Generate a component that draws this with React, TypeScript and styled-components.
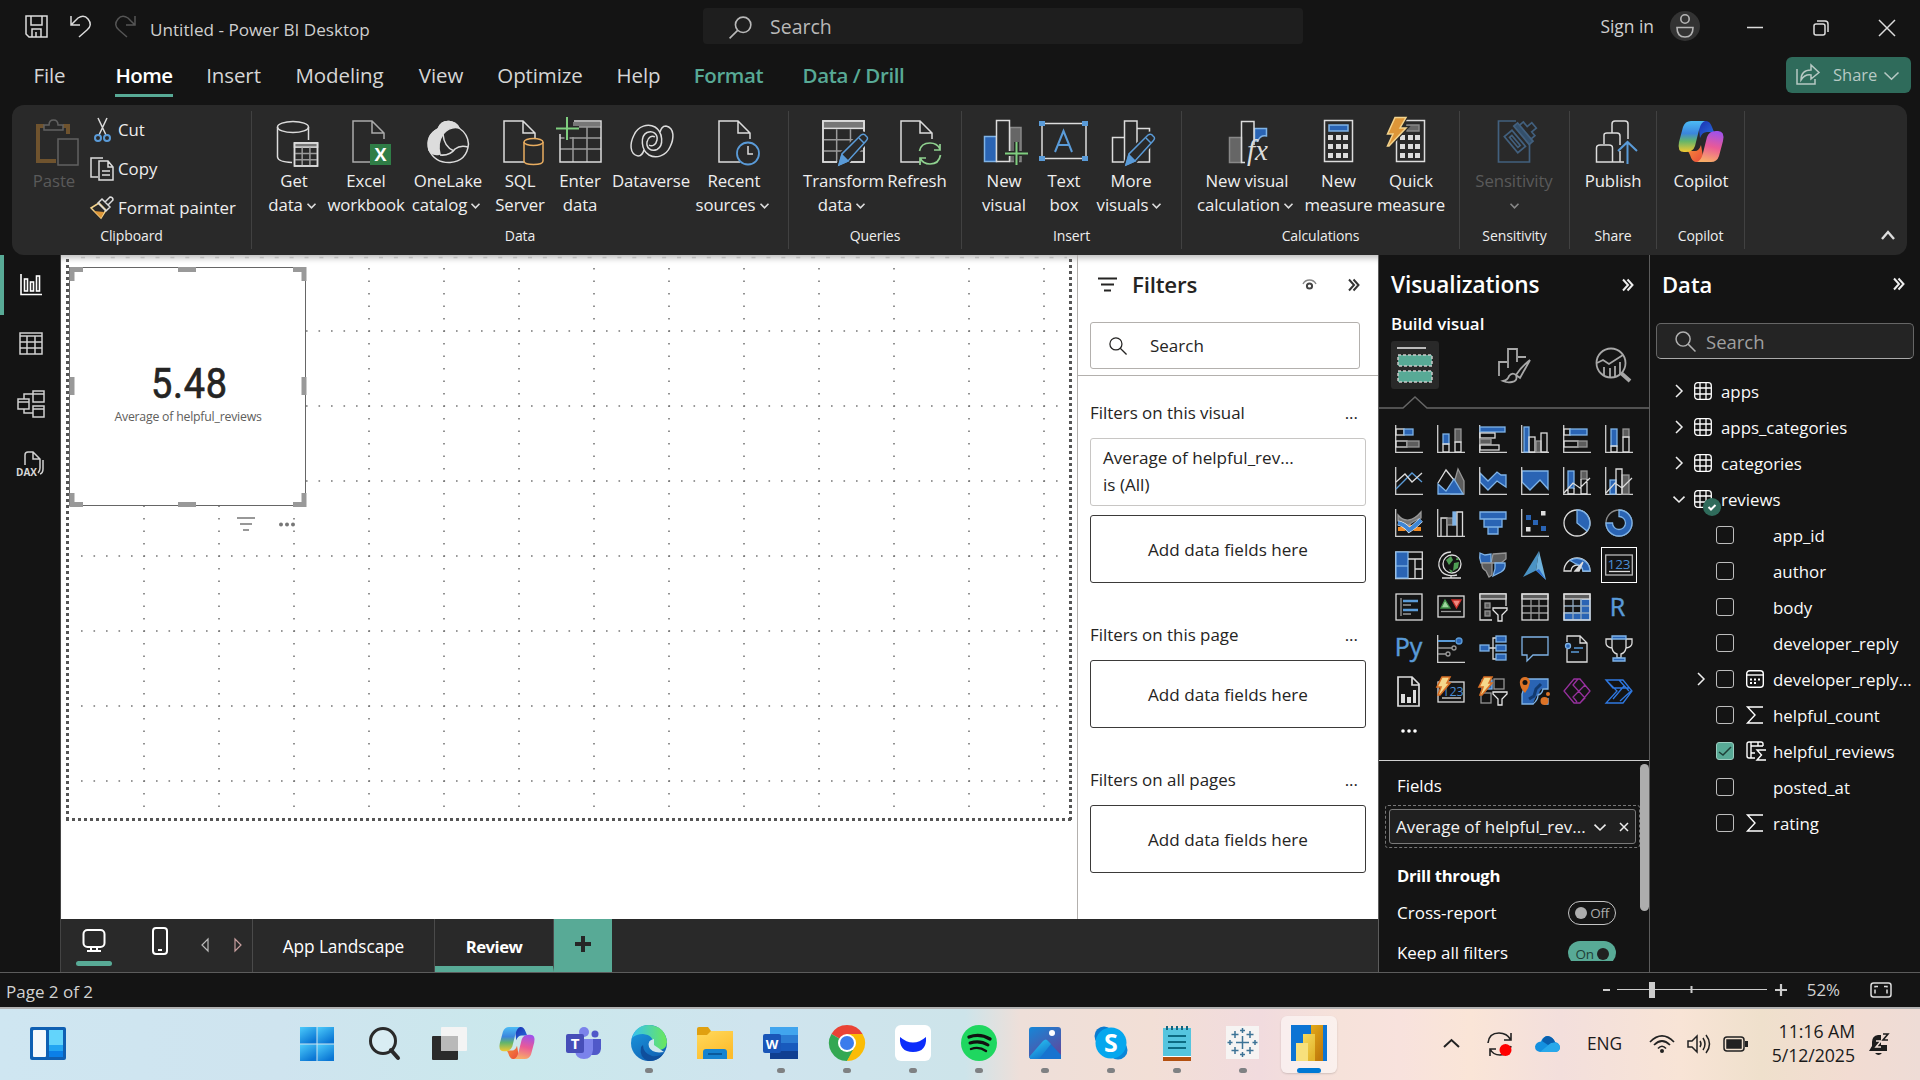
import React from 'react';
import styled, { createGlobalStyle, css } from 'styled-components';

const C = {
  bg: '#141414', panel: '#292929', line: '#5c5c5c', text: '#e8e8e8', dim: '#5f5f5f',
  green: '#58aa96', blue: '#2a64b4', lblue: '#7fb3e6', sky: '#5a9bd8', grey: '#666', lgrey: '#9a9a9a', w: '#dcdcdc',
};

const Global = createGlobalStyle`
  * { box-sizing: border-box; }
  body { margin: 0; background: ${C.bg}; overflow: hidden; font-family: "Open Sans", "Noto Sans", sans-serif; }
  svg { display: block; flex: none; overflow: visible; }
`;

const Root = styled.div`width: 1920px; height: 1080px; display: flex; flex-direction: column; color: ${C.text}; background: ${C.bg};`;
const Label = styled.span<{ $s?: number; $w?: number; $ls?: number; $c?: string; $ml?: number; $lh?: number }>`
  white-space: nowrap; font-size: ${p => p.$s ?? 17}px; font-weight: ${p => p.$w ?? 400};
  letter-spacing: ${p => p.$ls ?? 0}px; color: ${p => p.$c ?? 'inherit'};
  margin-left: ${p => p.$ml ?? 0}px; line-height: ${p => p.$lh ?? 24}px;
`;
const Shift = styled.span<{ $ml?: number; $mt?: number }>`display: block; flex: none; margin-left: ${p => p.$ml ?? 0}px; margin-top: ${p => p.$mt ?? 0}px;`;

/* ---------- top bars ---------- */
const TitleBar = styled.header`height: 52px; flex: none; display: flex; align-items: flex-start; padding-left: 25px;`;
const TitleText = styled.div`width: 234px; margin-left: 14px; font-size: 17.15px; line-height: 59px; white-space: nowrap; color: #cfcfcf;`;
const SearchTop = styled.div`width: 600px; height: 36px; margin: 8px 0 0 310px; background: #1e1e1e; border-radius: 4px; display: flex; align-items: center; padding: 2px 0 0 26px; color: #b9b9b9;`;
const Avatar = styled.div`width: 30px; height: 30px; border-radius: 50%; background: #333; margin: 11px 0 0 16px; display: flex; align-items: center; justify-content: center;`;
const MenuBar = styled.nav`height: 53px; flex: none; display: flex; align-items: flex-start; padding-left: 34px;`;
const MenuTab = styled.div<{ $w: number; $gap: number; $on?: boolean; $c?: string }>`
  width: ${p => p.$w}px; margin-right: ${p => p.$gap}px; height: 45px; display: flex; justify-content: center;
  white-space: nowrap; font-size: 20.5px; line-height: 46px; color: ${p => p.$c ?? (p.$on ? '#fff' : '#d6d6d6')};
  font-weight: ${p => (p.$on || p.$c ? 600 : 400)}; letter-spacing: ${p => (p.$on ? -0.6 : p.$c ? -0.4 : -0.1)}px;
  ${p => p.$on && css`border-bottom: 3px solid ${C.green};`}
`;
const ShareBtn = styled.button`
  width: 125px; height: 36px; margin: 5px 0 0 auto; margin-right: 9px; border: 0; border-radius: 6px; background: #2f6b5b; color: #b7c9c4;
  display: flex; align-items: center; padding: 0 0 0 10px; font-family: inherit;
`;
const Ribbon = styled.section`height: 150px; flex: none; margin: 0 13px 0 12px; background: ${C.panel}; border-radius: 12px; display: flex; position: relative; z-index: 2;`;
const Group = styled.div<{ $w: number }>`
  width: ${p => p.$w}px; height: 138px; margin-top: 6px; border-right: 1px solid #414141; display: flex; flex-direction: column;
`;
const GroupRow = styled.div<{ $pl: number }>`display: flex; height: 113px; flex: none; padding-left: ${p => p.$pl}px; padding-top: 6px;`;
const GroupName = styled.div`text-align: center; font-size: 14px; line-height: 22px; padding-top: 1px; letter-spacing: -0.1px; color: #eee;`;
const Tool = styled.div<{ $w: number; $off?: boolean }>`
  width: ${p => p.$w}px; flex: none; display: flex; flex-direction: column; align-items: center; color: ${p => (p.$off ? '#5a5a5a' : '#efefef')};
`;
const ToolText = styled.div`margin-top: 2px; font-size: 16.8px; line-height: 24px; text-align: center; white-space: nowrap; letter-spacing: -0.1px;`;
const ToolLine = styled.div<{ $drop?: boolean }>`display: flex; align-items: center; justify-content: center; gap: 4px; height: 24px; padding-right: ${p => (p.$drop ? 4 : 0)}px;`;
const ClipList = styled.div`display: flex; flex-direction: column; margin-left: 6px; margin-top: -7px;`;
const ClipItem = styled.div`display: flex; flex: none; align-items: center; height: 39px; gap: 4px; color: #eee;`;
const Collapse = styled.div`margin: 125px 12px 0 auto;`;

/* ---------- body ---------- */
const Body = styled.main`height: 718px; flex: none; display: flex; border-bottom: 1px solid ${C.line};`;
const Work = styled.div`width: 1317px; display: flex; flex-direction: column;`;
const WorkTop = styled.div`height: 664px; flex: none; display: flex; background: #fff; box-shadow: inset 0 8px 6px -5px #bbb;`;
const Rail = styled.aside`width: 61px; border-right: 1px solid #444; display: flex; flex-direction: column;`;
const RailBtn = styled.div<{ $on?: boolean; $up?: number }>`height: 60px; display: flex; align-items: center; justify-content: center; border-left: 4px solid ${p => (p.$on ? C.green : 'transparent')}; padding-right: 2px; padding-bottom: ${p => p.$up ?? 0}px;`;
const Canvas = styled.div`width: 1016px; position: relative; overflow: hidden;`;
const Grid = styled.svg`position: absolute; left: 0; top: 0;`;
const Card = styled.div`position: absolute; left: 8px; top: 12px; width: 237px; height: 239px; border: 1px solid #666; background: #fff; display: flex; flex-direction: column; align-items: center; padding-top: 88px;`;
const Handles = styled.svg`position: absolute; left: -1px; top: -2px;`;
const Big = styled.div`font-family: Roboto, sans-serif; font-weight: 400; -webkit-text-stroke: 0.7px #252423; font-size: 42px; line-height: 56px; height: 49px; color: #252423; transform: scaleX(0.9); letter-spacing: 0.8px; padding-left: 4px;`;
const Small = styled.div`font-size: 12.3px; line-height: 20px; color: #605e5c; letter-spacing: -0.22px; padding: 2px 0 0 1px;`;
const CardTools = styled.div`position: absolute; left: 176px; top: 262px; display: flex; align-items: center; gap: 24px;`;

const Filters = styled.aside`width: 301px; border-left: 1px solid #b3b0ad; color: #252423; display: flex; flex-direction: column;`;
const FilterHead = styled.div`height: 121px; border-bottom: 1px solid #b3b0ad; padding: 15px 0 0 12px;`;
const Row = styled.div<{ $h?: number; $pl?: number; $pr?: number; $mt?: number }>`display: flex; align-items: center; height: ${p => p.$h ?? 30}px; padding-left: ${p => p.$pl ?? 0}px; padding-right: ${p => p.$pr ?? 0}px; margin-top: ${p => p.$mt ?? 0}px;`;
const Push = styled.span`flex: 1;`;
const FSearch = styled.div`margin-top: 22px; width: 270px; height: 47px; border: 1px solid #b3b0ad; border-radius: 3px; display: flex; align-items: center; padding-left: 18px;`;
const FSection = styled.div<{ $mt: number }>`margin: ${p => p.$mt}px 12px 0 12px; display: flex; flex-direction: column;`;
const FTitle = styled.div`height: 50px; display: flex; justify-content: space-between; align-items: center; font-size: 16.9px; padding: 0 8px 2px 0;`;
const FBox = styled.div<{ $soft?: boolean }>`
  height: 68px; border: 1px solid ${p => (p.$soft ? '#c8c6c4' : '#3b3a39')}; border-radius: 3px; margin-bottom: 9px; font-size: 17.1px; line-height: 27px; white-space: nowrap;
  display: flex; ${p => (p.$soft ? css`flex-direction: column; justify-content: center; padding: 0 0 3px 12px;` : css`align-items: center; justify-content: center;`)}
`;

const Tabs = styled.div`height: 53px; background: ${C.panel}; display: flex; border-left: 1px solid #444; margin-left: -1px;`;
const ViewMode = styled.div<{ $on?: boolean; $ml: number }>`
  width: 36px; height: 47px; margin-left: ${p => p.$ml}px; display: flex; justify-content: center; padding-top: 8px;
  ${p => p.$on && css`&::after { content: ''; position: absolute; width: 36px; height: 5px; border-radius: 3px; background: ${C.green}; margin-top: 34px; }`}
`;
const PageTab = styled.div<{ $w: number; $on?: boolean }>`
  width: ${p => p.$w}px; display: flex; justify-content: center; align-items: center; border-right: 1px solid #4a4a4a; color: #fff;
  font-weight: ${p => (p.$on ? 700 : 400)}; font-size: ${p => (p.$on ? 16.7 : 17.3)}px; letter-spacing: ${p => (p.$on ? -0.5 : -0.1)}px; padding-top: ${p => (p.$on ? 7 : 2)}px;
  ${p => p.$on && css`border-bottom: 6px solid ${C.green};`}
`;
const AddTab = styled.div`width: 58px; background: ${C.green}; display: flex; align-items: center; justify-content: center; padding-bottom: 3px;`;

const Viz = styled.aside`width: 272px; border-left: 1px solid ${C.line}; border-right: 1px solid ${C.line}; display: flex; flex-direction: column; color: #fff; overflow: hidden;`;
const VizHead = styled.div`padding: 15px 0 0 12px; height: 150px; flex: none;`;
const VizTab = styled.div<{ $on?: boolean }>`width: 48px; height: 48px; border-radius: 3px; background: ${p => (p.$on ? C.panel : 'transparent')}; display: flex; align-items: center; justify-content: center;`;
const VizTabs = styled.div`display: flex; gap: 51px; margin-top: 5px;`;
const VizGrid = styled.div`display: grid; grid-template-columns: repeat(6, 42px); grid-auto-rows: 42px; padding-left: 9px; margin-top: 9px; height: 342px; flex: none;`;
const VizCell = styled.div<{ $sel?: boolean }>`width: 36px; height: 36px; margin: 3px; display: flex; align-items: center; justify-content: center; ${p => p.$sel && css`border: 1px solid #fff;`}`;
const Fields = styled.div`border-top: 1px solid #d0d0d0; height: 200px; flex: none; display: flex; justify-content: space-between;`;
const FieldCol = styled.div`width: 262px; padding: 13px 0 0 6px;`;
const Bar = styled.div`width: 9px; height: 147px; border-radius: 5px; background: #adadad; margin-top: 3px;`;
const Well = styled.div`width: 255px; height: 43px; border: 1px dashed #777; border-radius: 3px; margin-top: 7px; padding: 3px;`;
const Chip = styled.div`height: 35px; border: 1px solid #7a7a7a; border-radius: 3px; background: #202020; display: flex; align-items: center; padding-left: 6px; color: #f2f2f2;`;
const Toggle = styled.div<{ $on?: boolean }>`
  width: 48px; height: 24px; border-radius: 12px; display: flex; align-items: center; justify-content: center; gap: 3px; font-size: 13.5px; letter-spacing: -0.3px;
  ${p => (p.$on ? css`background: ${C.green}; color: #1f3f37; flex-direction: row-reverse; padding-top: 1px;` : css`border: 1px solid #c4c4c4; color: #adadad;`)}
  &::before { content: ''; width: 12px; height: 12px; border-radius: 50%; background: ${p => (p.$on ? '#202020' : '#adadad')}; }
`;
const Clip = styled.div`height: 22px; overflow: hidden; margin-top: 14px;`;

const Data = styled.aside`width: 270px; color: #fff; padding-top: 14px;`;
const DSearch = styled.div`margin: 24px 0 14px 6px; width: 258px; height: 36px; border: 1px solid #666; border-bottom-color: #aaa; border-radius: 5px; background: #242424; display: flex; align-items: center; padding: 1px 0 0 18px; color: #a0a0a0;`;
const TreeRow = styled.div<{ $child?: boolean }>`height: 36px; display: flex; align-items: center; padding-left: ${p => (p.$child ? 47 : 20)}px; font-size: 16.85px; white-space: nowrap; color: #fafafa;`;
const Slot = styled.span<{ $w: number }>`width: ${p => p.$w}px; flex: none; display: flex; align-items: center;`;
const Check = styled.span<{ $on?: boolean }>`width: 18px; height: 18px; flex: none; border: 1px solid ${p => (p.$on ? '#9ccdc0' : '#bdbdbd')}; border-radius: 3px; background: ${p => (p.$on ? C.green : 'transparent')}; display: flex; align-items: center; justify-content: center; margin-right: 12px;`;

const Status = styled.footer`height: 36px; flex: none; display: flex; align-items: center; padding: 0 28px 0 6px; border-bottom: 2px solid #b3b3b3; color: #d2d2d2; background: ${C.bg};`;

/* ---------- taskbar ---------- */
const Taskbar = styled.div`
  height: 71px; flex: none; display: flex; align-items: stretch; padding-left: 30px; color: #1a1a1a;
  background: linear-gradient(90deg, #cfe6f1 0, #cfe4ef 280px, #cae8ec 520px, #cfe4ee 760px, #cde4ea 965px, #eedfd9 1020px, #f2dfd6 1150px, #f1dbde 1260px, #f6e2da 1340px, #f8e2dd 1400px, #fae5d7 1470px, #f3dfdc 1560px, #f8e4d6 1680px, #efe0cc 1760px, #f2dcd2 1850px, #eedcd6 1920px);
`;
const TaskItem = styled.div<{ $on?: boolean }>`
  width: 66px; flex: none; display: flex; flex-direction: column; align-items: center;
  &:nth-of-type(4) { margin-left: 2px; }
  & > div { width: 56px; height: 57px; margin-top: 7px; border-radius: 6px; padding-top: 9px; display: flex; flex-direction: column; align-items: center;
    ${p => p.$on && css`background: rgba(255,255,255,.5); box-shadow: 0 1px 2px rgba(0,0,0,.15);`} }
`;
const Mark = styled.i<{ $on?: boolean }>`width: ${p => (p.$on ? 24 : 8)}px; height: 5px; border-radius: 3px; margin-top: 7px; background: ${p => (p.$on ? '#0078d4' : '#7f8183')};`;
const Clock = styled.div`width: 102px; text-align: right; font-size: 17.7px; line-height: 24px; padding-top: 10px; letter-spacing: -0.05px;`;

/* ---------- icons ---------- */
type G = { children?: React.ReactNode };
const I = ({ w, h, children, s = C.w, sw = 1.5, f = 'none' }: G & { w: number; h: number; s?: string; sw?: number; f?: string }) => (
  <svg width={w} height={h} viewBox={`0 0 ${w} ${h}`} fill={f} stroke={s} strokeWidth={sw}>{children}</svg>
);
const Chev = ({ c = '#ddd', w = 8 }: { c?: string; w?: number }) => <I w={w} h={w} s={c} sw={1.6}><path d={`M.5 ${w * 0.3}L${w / 2} ${w * 0.75}L${w - 0.5} ${w * 0.3}`} /></I>;
const Doc = ({ x = 8, c = C.w }: { x?: number; c?: string }) => (
  <g transform={`translate(${x} 0)`} stroke={c}><path d="M22 45H1V4H20L32 16V22M20 4V16H32" /></g>
);
const Pencil = () => (
  <g><path d="M20 48L23 37L42 18Q45 16 47 19Q50 21 47 24L29 44Z" fill={C.panel} stroke={C.panel} strokeWidth={5} /><path d="M20 48L23 37L42 18Q45 16 47 19Q50 21 47 24L29 44Z" fill={C.panel} stroke={C.sky} /><path d="M20 48L23 38L29 44Z" fill={C.sky} stroke={C.sky} /><path d="M40 21l5 5" stroke={C.sky} /></g>
);
const Keys = ({ x }: { x: number }) => <g fill={C.w} stroke="none">{[18, 27, 36].map(y => [0, 8, 15].map(d => <rect key={`${y}${d}`} x={x + d} y={y} width="5" height="5" />))}</g>;
const Tbl = ({ x, y, n }: { x: number; y: number; n: number }) => (
  <g><rect x={x} y={y} width={n} height={n} fill={C.panel} /><rect x={x} y={y} width={n} height={n * 0.18} fill="#777" /><path stroke={C.lgrey} d={`M${x} ${y + n * 0.46}h${n}M${x} ${y + n * 0.73}h${n}M${x + n / 3} ${y + n * 0.2}v${n * 0.8}M${x + n * 0.67} ${y + n * 0.2}v${n * 0.8}`} /><rect x={x} y={y} width={n} height={n} /></g>
);

const CopilotLogo = ({ id, w, h }: { id: string; w: number; h: number }) => (
  <svg width={w} height={h} viewBox="0 0 46 41">
    <defs>
      <linearGradient id={`${id}a`} x1="0" y1="0" x2="0" y2="1"><stop offset="0" stopColor="#4cbcf5" /><stop offset=".4" stopColor="#3b86dd" /><stop offset=".65" stopColor="#63b56b" /><stop offset="1" stopColor="#f2c931" /></linearGradient>
      <linearGradient id={`${id}b`} x1=".6" y1="0" x2=".4" y2="1"><stop offset="0" stopColor="#a052ea" /><stop offset=".5" stopColor="#ea5a96" /><stop offset="1" stopColor="#f8ad67" /></linearGradient>
      <linearGradient id={`${id}c`} x1="0" y1="0" x2="1" y2="1"><stop offset="0" stopColor="#1a2fae" /><stop offset="1" stopColor="#2a6fe0" /></linearGradient>
      <linearGradient id={`${id}d`} x1="0" y1="0" x2="1" y2="1"><stop offset="0" stopColor="#f6903a" /><stop offset="1" stopColor="#e9483b" /></linearGradient>
    </defs>
    <path d="M20 0H28Q32 0 34 6L36 11H29Q24 11 22 17Z" fill={`url(#${id}c)`} />
    <path d="M10 30H17Q21 30 23 24L26 41H18Q14 41 12 34Z" fill={`url(#${id}d)`} />
    <path d="M13 0H27Q23 1 21 9L17 25Q15 31 8 31H6Q-1 31 1 21L5 6Q7 0 13 0Z" fill={`url(#${id}a)`} />
    <path d="M33 41H19Q23 40 25 32L29 16Q31 10 38 10H40Q47 10 45 20L41 35Q39 41 33 41Z" fill={`url(#${id}b)`} />
  </svg>
);

const R = ({ children, sw = 1.5 }: G & { sw?: number }) => <I w={50} h={50} sw={sw}>{children}</I>;
const swirl = 'M12 39C3 37 4 26 8 18C12 9 22 6 29 10C37 15 38 29 31 32.500C25 35 20 31 21 25C22 20 26 18 29 20M12 39C16 39 17 36 18 33';
const ribbonIcons: Record<string, React.ReactNode> = {
  paste: <R><g opacity=".5"><path d="M15 9H9V44H27M34 9H39V17" stroke="#b57d33" strokeWidth="4" /><path d="M15 13V8H20Q20 3 24.500 3Q29 3 29 8H34V13Z" stroke="#999" /><rect x="29" y="22" width="20" height="26" fill={C.panel} stroke="#999" /></g></R>,
  get: <R><ellipse cx="24" cy="10" rx="15.500" ry="5.500" /><path d="M8.500 10V40Q9 45 23 45.500M39.500 10V23" /><Tbl x={25.500} y={26} n={23} /></R>,
  excel: <R><Doc x={11} c="#aaa" /><rect x="29" y="27" width="21" height="21" fill="#2f7d46" stroke="none" /><text x="39.500" y="44" fill="#fff" stroke="none" textAnchor="middle" fontSize="18" fontWeight="700" fontFamily="Open Sans">X</text></R>,
  lake: <R><path d="M15 12Q18 4 26 4.500Q33 5 36 11Q45 17 45.500 27Q44 44 27 45.500Q12 46 6 33Q3 18 15 12Z" /><path d="M15 12Q18 4 26 4.500Q33 5 36 11Q27 9 20 17Q14 26 17 37Q9 39 6 33Q2 19 15 12Z" fill={C.w} /><path d="M20 17Q21 30 31 34M17 38Q27 39 32 32Q37 28 45 30" /></R>,
  sql: <R><Doc x={8} /><path d="M29 25V44Q29 47.500 38.500 47.500T48 44V25" fill={C.panel} stroke="#e9ad60" /><ellipse cx="38.500" cy="25" rx="9.500" ry="3.500" fill={C.panel} stroke="#e9ad60" /></R>,
  enter: <R><rect x="18" y="5" width="27" height="5" fill="#777" stroke="none" /><path stroke={C.lgrey} d="M5 21H46M5 32H46M18 20V45M32 10V45M24 10H46" /><path d="M19 4H46V45H5V17" /><path d="M12 0V23M1 11.500H24" stroke={C.panel} strokeWidth="5" /><path d="M12 0V23M1 11.500H24" stroke="#7fce7f" strokeWidth="2" /></R>,
  verse: <R><path d={swirl} /><path d={swirl} transform="rotate(180 26 24)" /></R>,
  recent: <R><Doc x={9} /><circle cx="39" cy="36.500" r="11" fill={C.panel} stroke={C.sky} strokeWidth="1.800" /><path d="M39 29V37H44" /></R>,
  transform: <R><Tbl x={4} y={4} n={41} /><Pencil /></R>,
  refresh: <R><Doc x={8} /><circle cx="38" cy="36" r="13" fill={C.panel} stroke="none" /><path stroke="#8fd18f" strokeWidth="1.700" d="M27.500 34Q29 26 38 26Q45 26 48 32M48 27V33H42M48.500 38Q47 47 38 47Q31 47 28 41M28 48V41H34" /></R>,
  newv: <R><rect x="5.500" y="19.500" width="12" height="25" fill={C.blue} stroke={C.lblue} /><rect x="31" y="10.500" width="11" height="34" fill="#666" stroke="#888" /><rect x="17.500" y="3.500" width="13" height="41" fill={C.panel} /><path d="M37.500 25V48M26 36.500H49" stroke={C.panel} strokeWidth="5" /><path d="M37.500 25V48M26 36.500H49" stroke="#7fce7f" strokeWidth="2" /></R>,
  textb: <R><rect x="3" y="6.500" width="44" height="35" /><g fill={C.sky} stroke="none"><rect x="0" y="4" width="6" height="5" /><rect x="43" y="4" width="6" height="5" /><rect x="0" y="39" width="6" height="5" /><rect x="43" y="39" width="6" height="5" /></g><path d="M16 35L24.500 14L33 35M19 28H30" stroke={C.sky} strokeWidth="2" /></R>,
  more: <R><path d="M18 20.500H6.500V45H43.500V11.500H31M18.500 45V4H31V45" /><Pencil /></R>,
  calc: <R><rect x="7.500" y="20.500" width="12" height="25" fill="#666" stroke="#888" /><path d="M32.500 11.500H44.500V19Q38 18 36 24H32.500Z" fill={C.blue} stroke={C.lblue} /><path d="M32 28V4.500H19.500V45.500H23" /><text x="25" y="43" fill={C.w} stroke="none" fontStyle="italic" fontSize="29" fontFamily="Liberation Serif">fx</text></R>,
  measure: <R><rect x="10.500" y="3.500" width="28" height="41" /><rect x="15" y="8" width="19" height="6" fill={C.blue} stroke={C.lblue} /><Keys x={14} /></R>,
  quick: <R><rect x="10.500" y="3.500" width="28" height="41" /><rect x="21" y="8" width="12" height="6" fill="#666" stroke="#888" /><Keys x={14} /><path d="M9 0H20L14 11H20L3 29H1L7 17H1Z" fill="#dd9638" stroke={C.panel} strokeWidth="4" /><path d="M9 .5H20L14 11H20L3 29H1.500L7 17H1.500Z" fill="#dd9638" stroke="#f3d38c" /></R>,
  sens: <R><g stroke="#42607e" strokeWidth="1.700"><path d="M27 4H9.500V45H40.500V27" /><g transform="translate(34 17) rotate(50)"><path d="M-9 -2V-8H-3V-14H4V-8H9V-2Z" fill={C.panel} /><rect x="-12" y="-3" width="24" height="5" fill="#34506b" /><rect x="-10" y="6" width="21" height="10" /><rect x="-6" y="9.500" width="13" height="3" /></g></g></R>,
  publish: <R><path d="M24 16V7Q24 4 27 4H37Q40 4 40 7V22M16 27V18Q16 16 19 16H29Q32 16 32 19V28M8.500 45V31Q8.500 28 12 28H21Q24.500 28 24.500 31V45ZM24 45H36M32 34V45" /><path d="M39.500 47V25M30 34L39.500 25L49 34" stroke={C.sky} strokeWidth="2" /></R>,
};

const X = ({ children }: G) => <I w={28} h={28} s={C.w} sw={1.3}>{children}</I>;
const B = { fill: C.blue, stroke: C.lblue };
const Gy = { fill: '#5d5d5d', stroke: '#959595' };
const ax = <path d="M.7 0V27.300H28" stroke="#cfcfcf" />;
const bolt = <path d="M5 0H13L10 6H13L3 18H1L4 10H0Z" fill="#f5d88c" stroke="#d86f24" strokeWidth="1.600" />;
const funnel = <path d="M14 15H28V17L23 22V28H19V22L14 17Z" fill={C.bg} stroke="#e6e6e6" />;
const fx = 'Open Sans';
const vizIcons: React.ReactNode[] = [
  <X>{ax}<rect x="1" y="4" width="8" height="6" /><rect x="9" y="4" width="9" height="6" {...B} /><rect x="1" y="16" width="11" height="6" /><rect x="12" y="16" width="12" height="6" {...Gy} /></X>,
  <X>{ax}<rect x="6" y="9" width="6" height="10" {...B} /><rect x="6" y="19" width="6" height="8" /><rect x="18" y="4" width="6" height="13" {...Gy} /><rect x="18" y="17" width="6" height="10" /></X>,
  <X>{ax}<rect x="1" y="2" width="25" height="5" {...B} /><rect x="1" y="8" width="15" height="5" /><rect x="1" y="14" width="11" height="5" {...Gy} /><rect x="1" y="20" width="19" height="5" /></X>,
  <X>{ax}<rect x="3" y="2" width="5" height="25" {...B} /><rect x="8" y="12" width="6" height="15" /><rect x="15" y="16" width="5" height="11" {...Gy} /><rect x="20" y="8" width="6" height="19" /></X>,
  <X>{ax}<rect x="1" y="4" width="6" height="6" /><rect x="7" y="4" width="17" height="6" {...B} /><rect x="1" y="16" width="14" height="6" /><rect x="15" y="16" width="9" height="6" {...Gy} /></X>,
  <X>{ax}<rect x="6" y="4" width="6" height="17" {...B} /><rect x="6" y="21" width="6" height="6" /><rect x="18" y="4" width="6" height="8" {...Gy} /><rect x="18" y="12" width="6" height="15" /></X>,

  <X>{ax}<path d="M1 22L17 6L27 15" stroke={C.sky} /><path d="M1 15L10 7L17 15L27 6" /></X>,
  <X><path d="M14 27L21 2L27 14V27Z" {...Gy} /><path d="M1 16L9 3L17 13" /><path d="M1 27V17L9 24L17 12L26 27Z" {...B} /></X>,
  <X><path d="M1 6L9 14L18 5L22 8H27V20L18 14L9 23L1 15Z" {...B} />{ax}</X>,
  <X><path d="M1 4H27V22L19 13L9 23L1 15Z" {...B} />{ax}</X>,
  <X>{ax}<rect x="5" y="4" width="6" height="17" {...B} /><rect x="18" y="4" width="6" height="8" {...Gy} /><path d="M5 21V27H11V21M18 12V27H24V12M1 26L10 16L17 21L27 11" /></X>,
  <X>{ax}<rect x="5" y="13" width="6" height="14" {...B} /><rect x="17" y="8" width="7" height="19" {...Gy} /><path d="M11 27V2H17V27M1 26L10 16L17 21L27 11" /></X>,

  <X>{ax}<path d="M3 20H9L14 17L20 20H26" stroke="#f08a24" strokeWidth="4" /><path d="M3 6Q8 12 14 11T26 3V9Q18 12 14 16Q9 16 3 12Z" fill="#777" stroke="#999" /><path d="M3 14Q9 15 14 21Q19 18 26 11" stroke="#fff" strokeWidth="5" /><path d="M3 14Q9 15 14 21Q19 18 26 11" stroke="#3f86d4" strokeWidth="4" /></X>,
  <X>{ax}<path d="M4 27V9H10V27" /><rect x="10" y="9" width="6" height="7" {...Gy} /><rect x="16" y="3" width="3" height="13" {...B} fill={C.lblue} /><path d="M20 27V3H25.500V27" /></X>,
  <X><path d="M1 3H27V10H1ZM5 10H23V18H5ZM9 18H19V25H9Z" {...B} /></X>,
  <X>{ax}<g stroke="none" fill={C.blue}><rect x="5" y="6" width="5" height="5" /><rect x="12" y="11" width="5" height="5" /><rect x="20" y="17" width="5" height="5" /><rect x="20" y="2" width="4.500" height="4.500" fill="#ddd" /><rect x="5" y="18" width="4.500" height="4.500" fill="#ddd" /></g></X>,
  <X><circle cx="14" cy="14" r="13" /><path d="M14 1A13 13 0 0 1 24 22L14 14Z" {...B} /></X>,
  <X><circle cx="14" cy="14" r="13" stroke="#8a8a8a" /><path d="M14 1A13 13 0 1 1 1 14H7.500A6.500 6.500 0 1 0 14 7.500Z" {...B} /></X>,

  <X><rect x=".7" y="1" width="26.600" height="26.600" /><rect x="1" y="1" width="12" height="26" {...B} /><path d="M1 15H13" stroke={C.lblue} /><path d="M13 8H27M20 8V27M20 18H27" /></X>,
  <X><circle cx="15" cy="13" r="9" /><path d="M14 1A12 12 0 0 0 5 21Q10 26 20 24M14 24V27M5 27H24" /><path d="M9 9L14 5L16 9L12 14ZM17 12L22 11L21 17L16 20ZM20 6l2 3h-3zM12 18l4 2-2 2z" fill="#4f9e54" stroke="none" /></X>,
  <X><path d="M14 3L27 2V8L22 12L12 12Z" {...Gy} /><path d="M1 2L6 4L12 3V12H2Q0 7 1 2ZM16 12H26Q27 18 22 21L14 25L16 18Z" {...B} /><path d="M3 12H13V24L10 26L7 20Q2 17 3 12Z" {...Gy} /></X>,
  <X><path d="M18 0L2 26L15 19.500Z" fill="#4b93c4" stroke="none" /><path d="M18 0L15 19.500L25 29Z" fill="#6fb2dc" stroke="none" /><path d="M15 19.500L18 18L25 29Z" fill="#2d6ccc" stroke="none" /></X>,
  <X><path d="M1 20A13 13 0 0 1 27 20H20A6 6 0 0 0 8 20Z" /><path d="M7 9.500A13 13 0 0 1 27 20H20Q19 14 13 13Z" {...B} /><path d="M12 20L20 11L16 20Z" fill="#ddd" /></X>,
  <X><rect x=".7" y="4" width="26.600" height="20" stroke="#bbb" /><text x="14" y="17.500" fontSize="13.500" textAnchor="middle" fontFamily={fx} fill="#4b8ed4" stroke="none">123</text><path d="M4 20.500H25" /></X>,

  <X><rect x="1" y="1" width="26" height="26" /><path d="M6 5V23" stroke="#999" /><path d="M8 8H23M8 17H23" stroke={C.sky} strokeWidth="2.500" /><path d="M8 12H16M8 21H16" stroke="#999" /></X>,
  <X><rect x="1" y="3" width="26" height="21" /><path d="M4 15L8 7L13 15Z" fill="#9ed69e" stroke="#3f8f46" /><path d="M15 7H24L19.500 15Z" fill="#ef8a80" stroke="#c92f2a" /><path d="M4 18.500H24" stroke="#999" /></X>,
  <X><path d="M27 13V1H1V27H13" /><rect x="1" y="1" width="26" height="5" fill="#5d5d5d" /><rect x="6" y="10" width="5" height="5" {...Gy} /><rect x="6" y="18" width="5" height="5" {...Gy} />{funnel}</X>,
  <X><rect x="1" y="1" width="26" height="5" fill="#5d5d5d" /><path d="M10 6V27M18 6V27M1 13H27M1 20H27" stroke="#999" /><rect x="1" y="1" width="26" height="26" /></X>,
  <X><path d="M1 20H18V6H27V27H1Z" {...B} /><rect x="1" y="1" width="26" height="5" fill="#5d5d5d" /><path d="M10 6V27M18 6V27M1 13H27M1 20H27" stroke="#8fa8c0" /><rect x="1" y="1" width="26" height="26" /></X>,
  <X><text x="12.500" y="23" fontSize="25" textAnchor="middle" fontFamily={fx} fill={C.sky} stroke={C.sky} strokeWidth=".5">R</text></X>,

  <X><text x="13.500" y="21" fontSize="25" textAnchor="middle" fontFamily={fx} fill={C.sky} stroke={C.sky} strokeWidth=".5">Py</text></X>,
  <X>{ax}<path d="M1 6H18" stroke={C.sky} strokeWidth="2" /><path d="M1 13H15M1 19H9" stroke="#999" /><circle cx="22" cy="6" r="3" fill={C.blue} stroke={C.sky} /><circle cx="17" cy="13" r="2" stroke="#999" /><circle cx="11" cy="19" r="2" stroke="#999" /></X>,
  <X><path d="M10 13H17M22 3H14V24H18M14 13H18" /><rect x="1" y="10" width="9" height="6" {...B} /><rect x="17" y="1" width="10" height="6" {...B} /><rect x="17" y="10" width="10" height="6" {...B} /><rect x="17" y="19" width="10" height="6" {...B} /></X>,
  <X><path d="M1 2H27V20H12L6 26V20H1Z" stroke={C.lblue} /></X>,
  <X><path d="M4 7V1H17L24 8V27H4V14M17 1V8H24" /><circle cx="5" cy="11" r="2.500" {...B} /><path d="M11 13H20M8 17H16" stroke={C.sky} /></X>,
  <X><path d="M7 4V13Q8 18 12 19V23H16V19Q20 18 21 13V4M7 4H1V8Q1 12 7 13M21 4H27V8Q27 12 21 13" /><path d="M7 1H21V4H7ZM8 23H20V26H8Z" {...B} /></X>,

  <X><path d="M3 0H17L24 7V29H3ZM17 0V8H24" strokeWidth="1.700" /><path d="M6 26V17H10V26ZM12 26V20H16V26ZM18 26V13H21V26Z" fill="#ddd" stroke="none" /></X>,
  <X><rect x="1" y="5" width="26" height="20" /><text x="16" y="18.500" fontSize="12.500" textAnchor="middle" fontFamily={fx} fill="#4b8ed4" stroke="none">123</text><path d="M5 21H24" />{bolt}</X>,
  <X><rect x="2" y="16" width="10" height="10" {...Gy} fill="none" /><rect x="15" y="2" width="10" height="10" {...Gy} fill="none" /><rect x="3" y="3" width="10" height="9" {...B} />{funnel}{bolt}</X>,
  <X><path d="M6 2H27V12Q20 12 19 17Q20 22 12 27H1V17Z" {...B} /><path d="M27 12Q19 10 18 17Q15 18 12 27H27Z" fill={C.bg} stroke="none" /><path d="M27 12H22Q21 17 17 18Q17 23 12 27M27 21V27H23" stroke={C.lblue} /><path d="M20 7L15 12L13 19L8 22" stroke="#123a70" strokeWidth="3" /><path d="M-1 4Q0 0 4 0T9 5Q8 11 4 16Q-2 10 -1 4Z" fill="#dd7326" stroke="none" /><circle cx="4" cy="5.500" r="2.500" fill={C.bg} stroke="none" /><circle cx="23.500" cy="24" r="4" fill="#dd7326" stroke="none" /><circle cx="27" cy="17" r="2" fill="#dd7326" stroke="none" /></X>,
  <X><g stroke="#97309e"><path d="M11 2H17L27 14L17 26H11L1 14ZM15 2L10 8L22 21L17 26M22 8L10 20L14 25M16 14L22 8" /></g></X>,
  <X><g stroke="#2f78e0"><path d="M1 3H18L27 14L18 26H1L12 14ZM1 3L8 11H25M14 3L24 14M8 22L19 9M15 24L26 14" /></g></X>,
];

const Sigma = () => <I w={18} h={18} s="#fff" sw={1.4}><path d="M17 1H1.500L9 9L1.500 17H17" /></I>;
const TableI = ({ on }: { on?: boolean }) => (
  <I w={18} h={18} s="#fff" sw={1.3}><rect x=".7" y=".7" width="16.600" height="16.600" rx="3" /><path d="M1 6H17M1 12H17M6 1V17M12 1V17" />{on && <><circle cx="18" cy="17" r="9" fill="#2f6b5b" stroke="none" /><path d="M14.500 17L17 19.500L21.500 15" strokeWidth="2" /></>}</I>
);
const Cal = () => <I w={18} h={18} s="#fff" sw={1.4}><rect x=".7" y=".7" width="16.600" height="16.600" rx="3" /><path d="M1 5H17" /><path d="M4 9.500H14M4 13H10" strokeDasharray="2 2" strokeWidth="2" /></I>;
const TabSum = () => <I w={20} h={20} s="#fff" sw={1.4}><path d="M17 5V3Q17 1 15 1H3Q1 1 1 3V15Q1 17 3 17H9M5 1V17M5 5H17M5 12H9M12 1V5" /><path d="M20 9H11L15.500 14L11 19H20" /></I>;
const Mag = ({ n, c, flip }: { n: number; c: string; flip?: boolean }) => (
  <svg width={n} height={n} viewBox="0 0 20 20" fill="none" stroke={c} strokeWidth="1.400"><g transform={flip ? 'translate(20 0) scale(-1 1)' : undefined}><circle cx="7.700" cy="7.700" r="6.700" /><path d="M12.500 12.500L19.500 19.500" /></g></svg>
);
const DblChev = ({ c }: { c: string }) => <I w={12} h={12} s={c} sw={2}><path d="M1 .5L6 6L1 11.500M5.500 .5L10.500 6L5.500 11.500" /></I>;

const T = ({ w, icon, l1, l2, drop, off }: { w: number; icon: string; l1: string; l2?: string; drop?: boolean; off?: boolean }) => (
  <Tool $w={w} $off={off}>
    {ribbonIcons[icon]}
    <ToolText><ToolLine>{l1}</ToolLine>{(l2 || drop) && <ToolLine $drop={drop && !!l2}>{l2}{drop && <Chev c={off ? '#888' : '#ddd'} w={9} />}</ToolLine>}</ToolText>
  </Tool>
);

/* ---------- taskbar icons, 36 x 36 ---------- */
const Q = ({ children }: G) => <svg width="36" height="36" viewBox="0 0 36 36">{children}</svg>;
const grad = (id: string, a: string, b: string, h?: boolean) => <linearGradient id={id} x1="0" y1="0" x2={h ? 1 : 0.6} y2={h ? 0 : 1}><stop offset="0" stopColor={a} /><stop offset="1" stopColor={b} /></linearGradient>;
const tasks: { i: React.ReactNode; m?: boolean; on?: boolean }[] = [
  { i: <Q><defs>{grad('wi', '#4ccbfb', '#0a76d4')}</defs><g fill="url(#wi)"><rect x="1" y="2" width="16.500" height="16.500" /><rect x="18.500" y="2" width="16.500" height="16.500" /><rect x="1" y="19.500" width="16.500" height="16.500" /><rect x="18.500" y="19.500" width="16.500" height="16.500" /></g></Q> },
  { i: <Q><circle cx="18" cy="16" r="12.500" fill="#d9edf3" stroke="#2a2a2a" strokeWidth="3" /><path d="M26 25L33 33" stroke="#2a2a2a" strokeWidth="4" strokeLinecap="round" /></Q> },
  { i: <Q><rect x="1" y="11" width="26" height="24" rx="1" fill="#2b2b2b" /><rect x="10" y="2" width="26" height="24" rx="1" fill="#f4f4f4" /><rect x="10" y="11" width="17" height="15" fill="#b9b9b9" /></Q> },
  { i: <CopilotLogo id="tb" w={36} h={36} /> },
  { i: <Q><circle cx="19" cy="7" r="5" fill="#7b83eb" /><circle cx="30" cy="9" r="3.500" fill="#5059c9" /><path d="M27 14H36V24Q35 30 30 30H25Z" fill="#5059c9" /><path d="M10 14H28V25Q27 34 19 34T10 26Z" fill="#7b83eb" /><rect x="1" y="9" width="18" height="19" rx="2" fill="#464eb8" /><text x="10" y="24" fill="#fff" fontSize="15" fontWeight="700" textAnchor="middle" fontFamily={fx}>T</text></Q>, },
  { i: <Q><defs>{grad('e1', '#35c1f1', '#6be85a', true)}{grad('e2', '#1b9de2', '#1163b5')}</defs><circle cx="18" cy="18" r="18" fill="url(#e2)" /><path d="M1 13Q5 0 18 0Q34 1 36 17Q35 26 26 25Q21 25 22 20Q23 10 12 9Q5 9 1 13Z" fill="url(#e1)" /><path d="M12 20Q12 28 21 31Q28 32 33 28Q27 37 17 36Q8 32 10 22Z" fill="#0f4f9c" /><path d="M23 14Q16 15 18 22Q21 29 33 27Q26 22 23 20Z" fill="#cfe6ee" /></Q>, m: true },
  { i: <Q><defs>{grad('fo', '#ffd95c', '#fdbc2c')}</defs><path d="M0 4Q0 2 2 2H11L14 6V14H0Z" fill="#e0a010" /><path d="M0 10H10L14 6H36V34H0Z" fill="url(#fo)" /><path d="M6 34V27Q6 24 9 24H27Q30 24 30 27V34Z" fill="#1683d0" /><path d="M11 29H25" stroke="#0a5a9c" strokeWidth="2" /></Q> },
  { i: <Q><path d="M7 2H35V10H7Z" fill="#41a5ee" /><path d="M7 10H35V18H7Z" fill="#2b7cd3" /><path d="M7 18H35V26H7Z" fill="#185abd" /><path d="M7 26H35V34H7Z" fill="#103f91" /><rect x="0" y="9" width="18" height="19" rx="2" fill="#1a56b8" /><text x="9" y="24" fill="#fff" fontSize="13" fontWeight="700" textAnchor="middle" fontFamily={fx}>W</text></Q>, m: true },
  { i: <Q><path d="M18 18L2.400 9A18 18 0 0 1 33.600 9Z" fill="#ea4335" /><path d="M18 18L2.400 9A18 18 0 0 0 18 36L27 22Z" fill="#34a853" /><path d="M18 9H33.600A18 18 0 0 1 18 36L26 21Z" fill="#fbbc05" /><circle cx="18" cy="18" r="9" fill="#fff" /><circle cx="18" cy="18" r="7" fill="#3a7cec" /></Q>, m: true },
  { i: <Q><rect width="36" height="36" rx="6" fill="#fff" /><path d="M5 12Q18 23 31 12Q32 27 18 27T5 12Z" fill="#0c2dfb" /></Q>, m: true },
  { i: <Q><circle cx="18" cy="18" r="18" fill="#1fd760" /><g stroke="#111" fill="none" strokeLinecap="round"><path d="M8 12Q19 8 29 14" strokeWidth="3.400" /><path d="M9 18Q19 15 27 20" strokeWidth="3" /><path d="M10 24Q18 21 25 26" strokeWidth="2.400" /></g></Q>, m: true },
  { i: <Q><defs>{grad('ph', '#1587d8', '#5c4ba0')}{grad('ph2', '#2fd0f5', '#1274ce')}</defs><rect x="2" y="2" width="32" height="32" rx="3" fill="url(#ph)" /><path d="M3 34L17 16Q19 14 21 16L34 30V34Z" fill="#1773cf" /><path d="M2 32L16 16Q19 13 21 16L24 19L12 34H4Z" fill="url(#ph2)" /><circle cx="25" cy="8" r="3" fill="#fff" /></Q>, m: true },
  { i: <Q><circle cx="11" cy="11" r="9.500" fill="#0a7bd0" /><circle cx="25" cy="25" r="9.500" fill="#0a86d8" /><circle cx="18" cy="18" r="15.500" fill="#05a7ee" /><text x="18" y="27" fill="#fff" fontSize="25" fontWeight="700" textAnchor="middle" fontFamily={fx}>S</text></Q>, m: true },
  { i: <Q><rect x="4" y="3" width="28" height="30" fill="#55c5df" /><rect x="4" y="32" width="28" height="4" fill="#b4500f" /><path d="M4 31.500H32" stroke="#fff" /><path d="M9 11H27M9 17H27M9 23H27" stroke="#0d6b83" strokeWidth="2" /><path d="M8 1V5M13 1V5M18 1V5M23 1V5M28 1V5" stroke="#14647d" strokeWidth="2" /></Q>, m: true },
  { i: <Q><rect x="1" y="1" width="33" height="33" fill="#f6f4f3" /><path d="M17.500 11V24M11 17.500H24M17.500 3V8M15 5.500H20M17.500 27V32M15 29.500H20M10 6V13M6.500 9.500H13.500M25 6V13M21.500 9.500H28.500M10 22V29M6.500 25.500H13.500M25 22V29M21.500 25.500H28.500M5 15V20M2.500 17.500H7.500M30 15V20M27.500 17.500H32.500" stroke="#3c7396" strokeWidth="1.500" /></Q>, m: true },
  { i: <Q><defs>{grad('pb', '#e3a919', '#c07a0c')}{grad('pb2', '#f5d95c', '#e3b52c')}</defs><rect width="36" height="36" fill="#0c74d4" /><rect x="20" width="12" height="36" fill="url(#pb)" /><rect x="12" y="9" width="12" height="27" fill="url(#pb2)" /><rect x="5" y="18" width="12" height="18" fill="#f7e07c" /></Q>, m: true, on: true },
];

const gridX = Array.from({ length: 13 }, (_, i) => 83 + i * 75);
const gridY = Array.from({ length: 7 }, (_, i) => 76 + i * 75);
const tree: { n: string; icon?: React.ReactNode; exp?: boolean; on?: boolean }[] = [
  { n: 'app_id' }, { n: 'author' }, { n: 'body' }, { n: 'developer_reply' }, { n: 'developer_reply...', icon: <Cal />, exp: true },
  { n: 'helpful_count', icon: <Sigma /> }, { n: 'helpful_reviews', icon: <TabSum />, on: true }, { n: 'posted_at' }, { n: 'rating', icon: <Sigma /> },
];

export default function App() {
  return (
    <Root>
      <Global />
      <TitleBar>
        <Shift $mt={15}><I w={23} h={23}><path d="M1 1H22V22H4L1 19ZM6 1V10H17V1M7 22V14H16V22M11 17V22" /></I></Shift>
        <Shift $ml={22} $mt={15}><I w={22} h={23}><path d="M1 1V10H10M1 10L8 3Q14 -1 18 4Q23 10 17 15L9 22" /></I></Shift>
        <Shift $ml={22} $mt={15}><I w={22} h={23} s="#555"><path d="M21 1V10H12M21 10L14 3Q8 -1 4 4Q-1 10 5 15L13 22" /></I></Shift>
        <TitleText>Untitled - Power BI Desktop</TitleText>
        <Shift $ml={9} />
        <SearchTop><Mag n={23} c="#b9b9b9" flip /><Label $s={19.500} $ml={18}>Search</Label></SearchTop>
        <Push />
        <Label $s={17.4} $lh={53} $c="#cfcfcf">Sign in</Label>
        <Avatar><I w={18} h={24} s="#b5b5b5" sw={1.6}><circle cx="9" cy="5" r="4.200" /><path d="M1 13.500H17Q17 23 9 23T1 13.500Z" /></I></Avatar>
        <Shift $ml={47} $mt={27}><I w={16} h={2}><path d="M0 .5H16" /></I></Shift>
        <Shift $ml={50} $mt={20}><I w={16} h={16}><rect x="1" y="4" width="11" height="11" rx="2" /><path d="M4 1H12Q15 1 15 4V12" /></I></Shift>
        <Shift $ml={50} $mt={20}><I w={16} h={16}><path d="M0 0L16 16M16 0L0 16" /></I></Shift>
        <Shift $ml={25} />
      </TitleBar>
      <MenuBar>
        <MenuTab $w={31} $gap={50}>File</MenuTab>
        <MenuTab $w={58} $gap={35} $on>Home</MenuTab>
        <MenuTab $w={51} $gap={36}>Insert</MenuTab>
        <MenuTab $w={89} $gap={35}>Modeling</MenuTab>
        <MenuTab $w={44} $gap={35}>View</MenuTab>
        <MenuTab $w={84} $gap={35}>Optimize</MenuTab>
        <MenuTab $w={43} $gap={35}>Help</MenuTab>
        <MenuTab $w={67} $gap={40} $c={C.green}>Format</MenuTab>
        <MenuTab $w={103} $gap={0} $c={C.green}>Data / Drill</MenuTab>
        <ShareBtn>
          <I w={24} h={22} s="#b7c9c4"><path d="M1 5V20H19V15M5 16Q5 6 15 6V1L23 8.500L15 15V11Q9 10 5 16Z" /></I>
          <Label $s={16.5} $ml={13}>Share</Label><Shift $ml={7}><Chev c="#b7c9c4" w={15} /></Shift>
        </ShareBtn>
      </MenuBar>
      <Ribbon>
        <Group $w={240}>
          <GroupRow $pl={12}>
            <T w={60} icon="paste" l1="Paste" off />
            <ClipList>
              <ClipItem><Shift $ml={4}><I w={17} h={24}><path d="M4 0L12 17M13 0L5 17" /><circle cx="4" cy="20" r="3" stroke={C.sky} strokeWidth="2" /><circle cx="13" cy="20" r="3" stroke={C.sky} strokeWidth="2" /></I></Shift><Label $s={16.8} $ml={3}>Cut</Label></ClipItem>
              <ClipItem><I w={24} h={24}><path d="M8 20H1V1H13M9 4H18L23 10V23H9ZM18 4V10H23M12 14H20M12 18H20" /></I><Label $s={16.8}>Copy</Label></ClipItem>
              <ClipItem><I w={24} h={24}><path d="M1 12L9 7L16 14L11 22Z" stroke="#f3d38c" /><path d="M4 15L14 16L11 22Z" fill="#dd9638" stroke="none" /><path d="M8 7L12 3L20 11L16 15ZM15 6L20 1Q23 1 23 4L18 9" /></I><Label $s={16.9}>Format painter</Label></ClipItem>
            </ClipList>
          </GroupRow>
          <GroupName>Clipboard</GroupName>
        </Group>
        <Group $w={537}>
          <GroupRow $pl={10}>
            <T w={64} icon="get" l1="Get" l2="data" drop />
            <T w={80} icon="excel" l1="Excel" l2="workbook" />
            <T w={84} icon="lake" l1="OneLake" l2="catalog" drop />
            <T w={60} icon="sql" l1="SQL" l2="Server" />
            <T w={60} icon="enter" l1="Enter" l2="data" />
            <T w={82} icon="verse" l1="Dataverse" />
            <T w={84} icon="recent" l1="Recent" l2="sources" drop />
          </GroupRow>
          <GroupName>Data</GroupName>
        </Group>
        <Group $w={173}>
          <GroupRow $pl={12}><T w={85} icon="transform" l1="Transform" l2="data" drop /><T w={62} icon="refresh" l1="Refresh" /></GroupRow>
          <GroupName>Queries</GroupName>
        </Group>
        <Group $w={220}>
          <GroupRow $pl={13}><T w={58} icon="newv" l1="New" l2="visual" /><T w={62} icon="textb" l1="Text" l2="box" /><T w={72} icon="more" l1="More" l2="visuals" drop /></GroupRow>
          <GroupName>Insert</GroupName>
        </Group>
        <Group $w={278}>
          <GroupRow $pl={11}><T w={108} icon="calc" l1="New visual" l2="calculation" drop /><T w={75} icon="measure" l1="New" l2="measure" /><T w={70} icon="quick" l1="Quick" l2="measure" /></GroupRow>
          <GroupName>Calculations</GroupName>
        </Group>
        <Group $w={110}><GroupRow $pl={9}><T w={90} icon="sens" l1="Sensitivity" drop off /></GroupRow><GroupName>Sensitivity</GroupName></Group>
        <Group $w={87}><GroupRow $pl={10}><T w={66} icon="publish" l1="Publish" /></GroupRow><GroupName>Share</GroupName></Group>
        <Group $w={88}>
          <GroupRow $pl={11}><Tool $w={66}><Shift $mt={4}><CopilotLogo id="rb" w={46} h={41} /></Shift><Shift $mt={5} /><ToolText><ToolLine>Copilot</ToolLine></ToolText></Tool></GroupRow>
          <GroupName>Copilot</GroupName>
        </Group>
        <Collapse><I w={14} h={10} s="#ddd" sw={2.4}><path d="M1 9L7 2L13 9" /></I></Collapse>
      </Ribbon>

      <Body>
        <Rail>
          <RailBtn $on><I w={22} h={22} s="#fff" sw={1.6}><path d="M1 0V20.500H22" /><rect x="4.500" y="5" width="3" height="12" /><rect x="10.500" y="8" width="3" height="9" /><rect x="16.500" y="2" width="3" height="15" /></I></RailBtn>
          <RailBtn $up={4}><I w={24} h={23} s="#d0d0d0"><rect x="1" y="1" width="22" height="21" /><path d="M1 4H23M1 10H23M1 16H23M8 4V22M16 4V22" /></I></RailBtn>
          <RailBtn $up={2}><I w={28} h={28} s="#d0d0d0"><path d="M1 9H12V19H1ZM1 12H12M16 1H27V12H16ZM16 4H27M16 16H27V27H16ZM16 19H27M7 9V4H16M7 19V23H16" /></I></RailBtn>
          <RailBtn $up={2}><I w={26} h={26} s="#d0d0d0"><path d="M7 14V4Q7 1 10 1H15L22 8V17Q22 20 20 22M15 1V8H22M25 9V18Q25 22 22 23" /><text x="-2" y="25" fill="#d8d8d8" stroke="none" fontSize="10" fontWeight="700" fontFamily={fx}>DAX</text></I></RailBtn>
        </Rail>
        <Work>
          <WorkTop>
            <Canvas>
              <Grid width="1016" height="664" fill="none" stroke="#777" strokeWidth="1.600">
                {gridX.map(x => <path key={x} d={`M${x} 13V557`} strokeDasharray="1.600 10.900" />)}
                {gridY.map(y => <path key={y} d={`M20 ${y}H1006`} strokeDasharray="1.600 10.900" />)}
                <path d="M20 2.500H1006" stroke="#bbb" strokeDasharray="4 10.900" />
                <g stroke="#555" strokeWidth="3" strokeDasharray="3 3"><path d="M6.500 4V566" /><path d="M1009.500 4V566" /><path d="M5 564.500H1011" /></g>
              </Grid>
              <Card>
                <Handles width="240" height="242" fill="none" stroke="#999" strokeWidth="5">
                  <path d="M3 15V3.500H14M224 3.500H235V15M3 227V238.500H14M224 238.500H235V227M109 3.500H127M109 238.500H127M3 111V129M235 111V129" />
                </Handles>
                <Big>5.48</Big>
                <Small>Average of helpful_reviews</Small>
              </Card>
              <CardTools><I w={18} h={15} s="#777" sw={1.6}><path d="M0 1H18M3 7H15M6 13H12" /></I><I w={16} h={5} f="#777" s="none"><circle cx="2" cy="2.500" r="2" /><circle cx="8" cy="2.500" r="2" /><circle cx="14" cy="2.500" r="2" /></I></CardTools>
            </Canvas>
            <Filters>
              <FilterHead>
                <Row $pl={8} $pr={18}>
                  <I w={19} h={15} s="#252423" sw={2}><path d="M0 .5H19M3 6.500H16M6 12.500H13" /></I>
                  <Label $s={22.300} $w={600} $ml={15} $ls={-0.2}>Filters</Label><Push />
                  <I w={15} h={11} s="#444" sw={1.4}><path d="M1 4Q3 0 7.500 0T14 4" stroke="#888" /><circle cx="7.500" cy="6" r="2.600" strokeWidth="2" /></I>
                  <Shift $ml={31}><DblChev c="#333" /></Shift>
                </Row>
                <FSearch><Mag n={18} c="#252423" /><Label $s={17} $ml={23}>Search</Label></FSearch>
              </FilterHead>
              <FSection $mt={12}><FTitle><span>Filters on this visual</span><span>...</span></FTitle><FBox $soft><span>Average of helpful_rev...</span><span>is (All)</span></FBox><FBox>Add data fields here</FBox></FSection>
              <FSection $mt={18}><FTitle><span>Filters on this page</span><span>...</span></FTitle><FBox>Add data fields here</FBox></FSection>
              <FSection $mt={18}><FTitle><span>Filters on all pages</span><span>...</span></FTitle><FBox>Add data fields here</FBox></FSection>
            </Filters>
          </WorkTop>
          <Tabs>
            <ViewMode $ml={15} $on><I w={24} h={25} s="#fff" sw={2}><rect x="1.500" y="3" width="21" height="17" rx="4" /><path d="M5 24H19M9 20V24M15 20V24" /></I></ViewMode>
            <ViewMode $ml={30}><I w={16} h={28} s="#fff" sw={2}><rect x="1" y="1" width="14" height="26" rx="3" /><path d="M6 23H10" /></I></ViewMode>
            <Shift $ml={23} $mt={19}><I w={8} h={14} s="#bbb" sw={1.2}><path d="M7 1V13L1 7Z" /></I></Shift>
            <Shift $ml={25} $mt={19}><I w={8} h={14} s="#c9a0a0" sw={1.2}><path d="M1 1V13L7 7Z" /></I></Shift>
            <PageTab $w={11}>{' '}</PageTab>
            <PageTab $w={182}>App Landscape</PageTab>
            <PageTab $w={119} $on>Review</PageTab>
            <AddTab><I w={16} h={16} s="#262626" sw={4}><path d="M8 0V16M0 8H16" /></I></AddTab>
          </Tabs>
        </Work>
        <Viz>
          <VizHead>
            <Row $pr={15}><Label $s={22.600} $w={600} $ls={-0.1}>Visualizations</Label><Push /><DblChev c="#eee" /></Row>
            <Row $h={24} $mt={12}><Label $s={16.900} $w={600}>Build visual</Label></Row>
            <VizTabs>
              <VizTab $on><I w={36} h={36}><path d="M0 1H29" strokeWidth="2" stroke="#bbb" /><g fill={C.green} stroke="#c9c9c9" strokeDasharray="3 2"><rect x="1" y="8" width="34" height="11" /><rect x="1" y="24" width="34" height="11" /></g></I></VizTab>
              <VizTab><I w={32} h={34} s="#a8a8a8" sw={1.8}><path d="M1 28V14H9M10 20V1H19V14M20 9H28M32 12L22 30L18 27Q24 18 32 12ZM5 33Q10 32 11 28Q14 24 18 27Q20 33 14 34Q9 35 5 33Z" /></I></VizTab>
              <VizTab><I w={36} h={36} s="#a8a8a8" sw={1.8}><circle cx="16" cy="16" r="14.500" /><path d="M2 16L8 13L14 17L28 8M9 20V28M15 21V30M20 19V30M25 15V27" /><path d="M26 26L35 34" strokeWidth="4" /></I></VizTab>
            </VizTabs>
          </VizHead>
          <Shift $mt={-9}><I w={270} h={13} s="#666"><path d="M0 12H24L36 1L48 12H270" /></I></Shift>
          <VizGrid>
            {vizIcons.map((v, i) => <VizCell key={i} $sel={i === 23}>{v}</VizCell>)}
            <VizCell><I w={16} h={4} s="none" f="#fff"><circle cx="2" cy="0" r="1.800" /><circle cx="8" cy="0" r="1.800" /><circle cx="14" cy="0" r="1.800" /></I></VizCell>
          </VizGrid>
          <Fields>
            <FieldCol>
              <Row $h={24} $pl={12}><Label $s={16.800}>Fields</Label></Row>
              <Well><Chip><Label $s={17}>Average of helpful_rev...</Label><Shift $ml={8}><Chev c="#eee" w={12} /></Shift><Shift $ml={13}><I w={10} h={10} s="#eee"><path d="M1 1L9 9M9 1L1 9" /></I></Shift></Chip></Well>
              <Row $h={24} $pl={12} $mt={16}><Label $s={16.700} $w={700} $ls={-0.3}>Drill through</Label></Row>
              <Row $h={24} $pl={12} $pr={24} $mt={13}><Label $s={17}>Cross-report</Label><Push /><Toggle>Off</Toggle></Row>
              <Clip><Row $h={28} $pl={12} $pr={24}><Label $s={16.900}>Keep all filters</Label><Push /><Toggle $on>On</Toggle></Row></Clip>
            </FieldCol>
            <Bar />
          </Fields>
        </Viz>
        <Data>
          <Row $pl={12} $pr={15}><Label $s={22} $w={600}>Data</Label><Push /><DblChev c="#eee" /></Row>
          <DSearch><Mag n={21} c="#b0b0b0" /><Label $s={18.500} $ml={10}>Search</Label></DSearch>
          {['apps', 'apps_categories', 'categories', 'reviews'].map((n, i) => (
            <TreeRow key={n}>
              <Slot $w={24}>{i < 3 ? <Shift $ml={5}><I w={8} h={12} s="#eee"><path d="M1 0L7 6L1 12" /></I></Shift> : <Shift $ml={3}><Chev c="#eee" w={12} /></Shift>}</Slot>
              <Slot $w={27}><TableI on={i === 3} /></Slot>{n}
            </TreeRow>
          ))}
          {tree.map(t => (
            <TreeRow key={t.n} $child>
              <Slot $w={19}>{t.exp && <I w={8} h={12} s="#eee"><path d="M1 0L7 6L1 12" /></I>}</Slot>
              <Check $on={t.on}>{t.on && <I w={12} h={9} s="#1e3f37"><path d="M0 5L4 8L12 0" /></I>}</Check>
              <Slot $w={27}>{t.icon}</Slot>{t.n}
            </TreeRow>
          ))}
        </Data>
      </Body>

      <Status>
        <Shift $mt={4}><Label $s={17}>Page 2 of 2</Label></Shift><Push />
        <I w={184} h={18} s="#ccc" sw={1}><path d="M0 9H7" strokeWidth="2" /><path d="M14 8.500H164" /><path d="M88.500 5V12" strokeWidth="2" /><rect x="46" y="1" width="6" height="16" fill="#ccc" stroke="none" /><path d="M178 3V15M172 9H184" strokeWidth="2.200" /></I>
        <Label $s={16.900} $ml={20}>52%</Label>
        <Shift $ml={30}><I w={22} h={15} s="#ddd"><rect x="1" y="0" width="20" height="14" rx="2.500" /><path d="M8 3.500H5V10.500H8M14 3.500H17V10.500H14" strokeDasharray="4 2 4 10" /></I></Shift>
      </Status>

      <Taskbar>
        <Shift $mt={18}><svg width="36" height="34" viewBox="0 0 36 34"><rect width="36" height="33" rx="2" fill="#0f5fb2" /><rect x="3" y="3" width="13" height="27" rx="1" fill="#f5f8fb" /><rect x="19" y="3" width="14" height="15" fill="#63d4fb" /><rect x="19" y="18" width="14" height="6" fill="#22a5f2" /><rect x="19" y="24" width="14" height="6" fill="#0b7fe8" /></svg></Shift>
        <Shift $ml={218} />
        {tasks.map((t, i) => <TaskItem key={i} $on={t.on}><div>{t.i}{t.m && <Mark $on={t.on} />}</div></TaskItem>)}
        <Push />
        <Shift $mt={30}><I w={17} h={9} s="#222" sw={2}><path d="M1 8L8.500 1L16 8" /></I></Shift>
        <Shift $ml={27} $mt={23}><I w={26} h={24} s="#222" sw={1.6}><path d="M1 11Q2 1 12 1Q20 1 24 8M24 1V8H17M24 14Q22 23 13 23Q6 23 3 17M3 24V17H9" /><circle cx="18.500" cy="18" r="6" fill="#f00" stroke="none" /></I></Shift>
        <Shift $ml={22} $mt={27}><svg width="25" height="17" viewBox="0 0 25 17"><path d="M5 16Q0 15 0 10.500Q1 6 6 5.500Q8 0 13 0Q18 1 20 6Q25 7 25 12Q24 16 20 16Z" fill="#1490df" /><path d="M7 5Q9 0 13 0Q18 1 20 6L13 9Z" fill="#0a5fae" /><path d="M5 16L16 7Q25 6 25 12Q24 16 20 16Z" fill="#28a8ea" /></svg></Shift>
        <Label $s={17.300} $ml={27} $lh={70} $ls={-0.1}>ENG</Label>
        <Shift $ml={28} $mt={26}><I w={24} h={18} s="#222" sw={1.7}><path d="M0 7Q12 -5 24 7M4 10Q12 2 20 10M8 13.500Q12 9 16 13.500" /><circle cx="12" cy="16" r="2" fill="#222" stroke="none" /></I></Shift>
        <Shift $ml={13} $mt={25}><I w={25} h={20} s="#222"><path d="M1 7H5L10 2V18L5 13H1ZM13 7Q15 10 13 13M16 4Q20 10 16 16M19 1Q26 10 19 19" /></I></Shift>
        <Shift $ml={11} $mt={27}><I w={25} h={16} s="#222"><rect x="1" y="1" width="20" height="14" rx="3" /><rect x="4" y="4" width="14" height="8" fill="#222" /><path d="M23.500 5V11" strokeWidth="3" /></I></Shift>
        <Shift $ml={5} />
        <Clock><div>11:16 AM</div><div>5/12/2025</div></Clock>
        <Shift $ml={14} $mt={25}><svg width="20" height="22" viewBox="0 0 20 22"><path d="M0 17L3 12V8Q3 2 9 1H12V11H18V17ZM6 19H13Q9.500 23 6 19Z" fill="#1d1d1d" /><path d="M7 7H12L7 13H12" stroke="#f0dfd8" strokeWidth="1.500" fill="none" /><path d="M14 0H19L14 6H19" stroke="#1d1d1d" strokeWidth="1.600" fill="none" /></svg></Shift>
        <Shift $ml={31} />
      </Taskbar>
    </Root>
  );
}
